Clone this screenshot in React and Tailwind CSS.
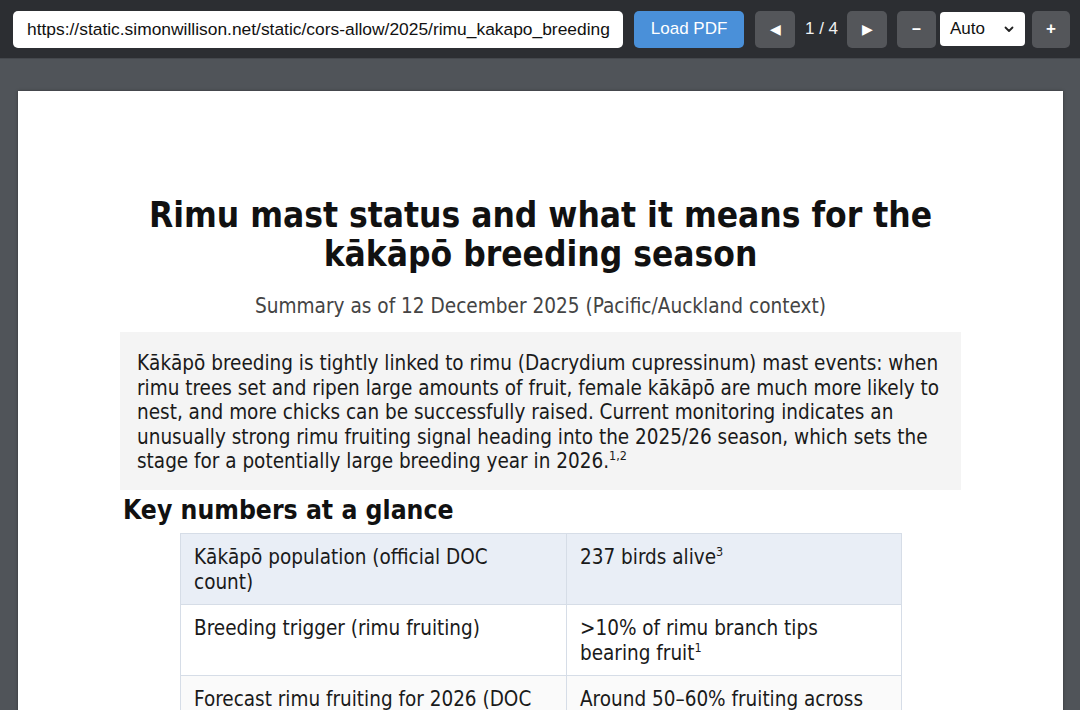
import React from 'react';

const doc = { fontFamily: '"DejaVu Sans Condensed", "DejaVu Sans", sans-serif', fontStretch: 'condensed' };
const ui = { fontFamily: '"Liberation Sans", Arial, sans-serif' };

function Sup({ children }) {
  return <sup className="text-[12.5px] -top-[8px]">{children}</sup>;
}

const rows = [
  { k: 'Kākāpō population (official DOC count)', v: <>237 birds alive<Sup>3</Sup></>, bg: 'bg-[#e9eef6]' },
  { k: 'Breeding trigger (rimu fruiting)', v: <>&gt;10% of rimu branch tips bearing fruit<Sup>1</Sup></>, bg: 'bg-white' },
  { k: 'Forecast rimu fruiting for 2026 (DOC modelling)', v: <>Around 50–60% fruiting across the main islands<Sup>2</Sup></>, bg: 'bg-[#fafafa]' },
];

export default function App() {
  return (
    <div className="w-[1080px] h-[710px] overflow-hidden bg-[#505459] flex flex-col">
      {/* toolbar */}
      <div className="h-[58px] shrink-0 bg-[#2c2e32] flex items-center pl-[13px] pr-[10px] gap-[10px]" style={ui}>
        <div className="w-[611px] h-[37px] bg-white rounded-[5px] flex items-center px-[14px] text-[17.4px] text-[#111] overflow-hidden whitespace-nowrap">
          https://static.simonwillison.net/static/cors-allow/2025/rimu_kakapo_breeding
        </div>
        <button className="ml-[1px] w-[110px] h-[37px] rounded-[5px] bg-[#4a90d9] text-white text-[17px]">Load PDF</button>
        <div className="flex items-center ml-[1px] gap-[10px]">
          <button className="w-[40px] h-[37px] rounded-[5px] bg-[#54565a] text-white text-[14px] flex items-center justify-center">◀</button>
          <span className="text-[#f1f1f1] text-[17px] w-[32px] text-center whitespace-nowrap">1 / 4</span>
          <button className="w-[40px] h-[37px] rounded-[5px] bg-[#54565a] text-white text-[14px] flex items-center justify-center">▶</button>
        </div>
        <div className="flex items-center gap-[4px]">
          <button className="w-[39px] h-[37px] rounded-[5px] bg-[#54565a] text-white text-[16px] font-bold flex items-center justify-center">–</button>
          <div className="w-[85px] h-[34px] rounded-[4px] bg-white flex items-center justify-between px-[10px] text-[17px] text-[#111]">
            <span>Auto</span>
            <svg width="12" height="12" viewBox="0 0 12 12" fill="none" stroke="#222" strokeWidth="1.8" strokeLinecap="round" strokeLinejoin="round"><path d="M2.5 4.5 6 8l3.5-3.5" /></svg>
          </div>
          <button className="ml-[3px] w-[38px] h-[37px] rounded-[5px] bg-[#54565a] text-white text-[17px] font-bold flex items-center justify-center">+</button>
        </div>
      </div>

      {/* viewer */}
      <div className="flex-1 pt-[32px] pl-[18px] pr-[17px] border-t border-[#45484d]">
        <div className="bg-white h-[700px] shadow-[0_0_3px_rgba(0,0,0,0.35)] pt-[105px]" style={doc}>
          <h1 className="text-[35px] leading-[39px] font-bold text-center text-[#111]">
            Rimu mast status and what it means for the<br />kākāpō breeding season
          </h1>
          <p className="text-center text-[20.6px] leading-[30px] text-[#444] mt-[17px]">Summary as of 12 December 2025 (Pacific/Auckland context)</p>
          <div className="mx-[102px] mt-[11px] bg-[#f4f4f4] pl-[17px] pr-[12px] pt-[19px] pb-[16px] text-[20.5px] leading-[24.6px] text-[#1a1a1a]">
            Kākāpō breeding is tightly linked to rimu (Dacrydium cupressinum) mast events: when rimu trees set and ripen large amounts of fruit, female kākāpō are much more likely to nest, and more chicks can be successfully raised. Current monitoring indicates an unusually strong rimu fruiting signal heading into the 2025/26 season, which sets the stage for a potentially large breeding year in 2026.<Sup>1,2</Sup>
          </div>
          <h2 className="ml-[105px] mt-[5px] text-[26.3px] leading-[30px] font-bold text-[#111]">Key numbers at a glance</h2>
          <table className="ml-[162px] mt-[8px] w-[722px] border-collapse text-[20.5px] leading-[24.6px] text-[#1a1a1a]">
            <tbody>
              {rows.map((r, i) => (
                <tr key={i} className={r.bg}>
                  <td className="w-[386px] border border-[#d6dde7] pl-[13px] pr-[27px] pt-[11px] pb-[10px] align-top">{r.k}</td>
                  <td className="border border-[#d6dde7] pl-[13px] pr-[21px] pt-[11px] pb-[10px] align-top">{r.v}</td>
                </tr>
              ))}
            </tbody>
          </table>
        </div>
      </div>
    </div>
  );
}
